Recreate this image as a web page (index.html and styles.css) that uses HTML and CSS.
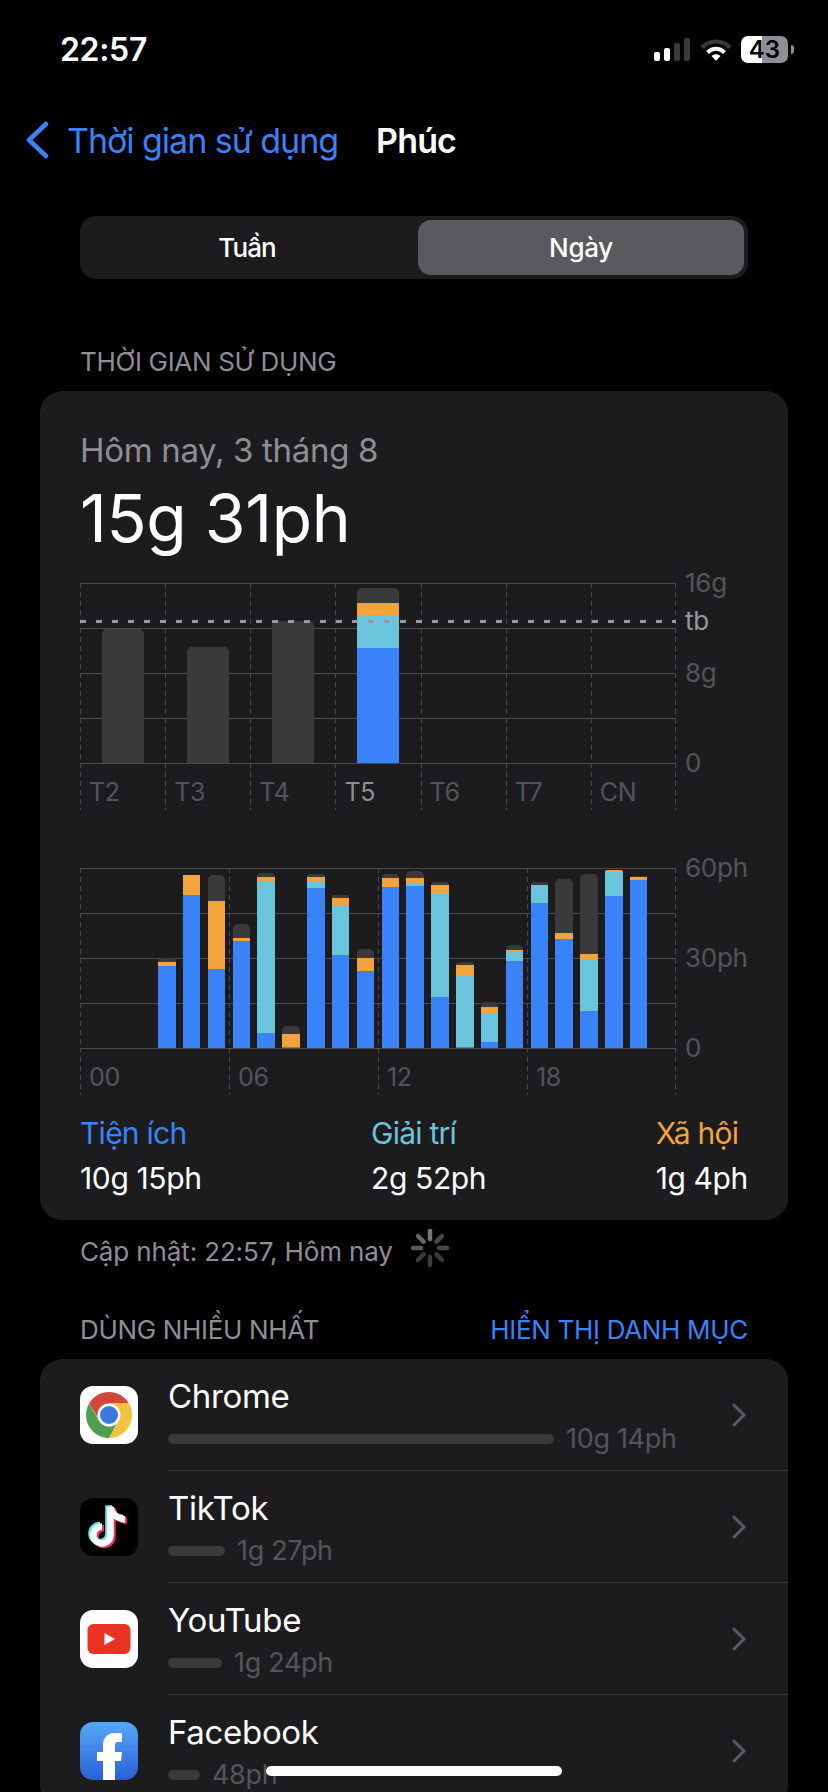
FILE: index.html
```html
<!DOCTYPE html>
<html lang="vi">
<head>
    <meta charset="UTF-8">
    <meta name="viewport" content="width=device-width, initial-scale=1.0">
    <title>Thời gian sử dụng</title>
    <link rel="stylesheet" href="styles.css">
</head>
<body>
    <div class="status-bar">
        <span class="clock">22:57</span>
        <div class="status-icons">
            <div class="signal">
                <i class="signal-bar on h1"></i>
                <i class="signal-bar on h2"></i>
                <i class="signal-bar h3"></i>
                <i class="signal-bar h4"></i>
            </div>
            <svg class="wifi" width="32" height="23" viewBox="0 0 32 23">
                <path d="M2 9.5C10 1.5 22 1.5 30 9.5" fill="none" stroke="#3a3a3c" stroke-width="4"/>
                <path d="M7.5 14.5C12.5 9.5 19.5 9.5 24.5 14.5" fill="none" stroke="#fff" stroke-width="4"/>
                <path d="M11.5 18 16 23 20.5 18C18 15.5 14 15.5 11.5 18Z" fill="#fff"/>
            </svg>
            <div class="battery"><span>43</span></div>
            <i class="battery-tip"></i>
        </div>
    </div>

    <div class="nav">
        <svg class="back-icon" width="26" height="38" viewBox="0 0 26 38">
            <path d="M22 3 5 19 22 35" fill="none" stroke="#3a82f7" stroke-width="4.5" stroke-linecap="round" stroke-linejoin="round"/>
        </svg>
        <span class="back-label">Thời gian sử dụng</span>
        <span class="nav-title">Phúc</span>
    </div>

    <div class="segment">
        <div class="segment-item week">Tuần</div>
        <div class="segment-item active">Ngày</div>
    </div>

    <div class="section-label first">THỜI GIAN SỬ DỤNG</div>

    <div class="card usage-card">
        <div class="date">Hôm nay, 3 tháng 8</div>
        <div class="total">15g 31ph</div>

        <!-- week chart -->
        <div class="chart week-chart">
            <div class="plot">
                <div class="cols cols-week">
                    <div class="col">T2</div>
                    <div class="col">T3</div>
                    <div class="col">T4</div>
                    <div class="col today">T5</div>
                    <div class="col">T6</div>
                    <div class="col">T7</div>
                    <div class="col">CN</div>
                </div>
                <div class="bars bars-week">
                    <div class="bar"><span class="seg gray" style="height:134px"></span></div>
                    <div class="bar"><span class="seg gray" style="height:116px"></span></div>
                    <div class="bar"><span class="seg gray" style="height:142px"></span></div>
                    <div class="bar">
                        <span class="seg gray" style="height:15px"></span>
                        <span class="seg orange" style="height:12px"></span>
                        <span class="seg teal" style="height:33px"></span>
                        <span class="seg blue" style="height:115px"></span>
                    </div>
                    <div class="bar"></div>
                    <div class="bar"></div>
                    <div class="bar"></div>
                </div>
                <div class="avg-line"></div>
            </div>
            <div class="axis">
                <span class="tick t-top">16g</span>
                <span class="tick t-avg">tb</span>
                <span class="tick t-mid">8g</span>
                <span class="tick t-zero">0</span>
            </div>
        </div>

        <!-- hourly chart -->
        <div class="chart hour-chart">
            <div class="plot">
                <div class="cols cols-hour">
                    <div class="col">00</div>
                    <div class="col">06</div>
                    <div class="col">12</div>
                    <div class="col">18</div>
                </div>
                <div class="bars bars-hour">
                    <div class="bar"></div>
                    <div class="bar"></div>
                    <div class="bar"></div>
                    <div class="bar"><span class="seg gray" style="height:3.7px"></span><span class="seg orange" style="height:4px"></span><span class="seg blue" style="height:82.3px"></span></div>
                    <div class="bar"><span class="seg gray" style="height:.7px"></span><span class="seg orange" style="height:19.3px"></span><span class="seg blue" style="height:153.3px"></span></div>
                    <div class="bar"><span class="seg gray" style="height:26px"></span><span class="seg orange" style="height:68px"></span><span class="seg blue" style="height:79.3px"></span></div>
                    <div class="bar"><span class="seg gray" style="height:14px"></span><span class="seg orange" style="height:3px"></span><span class="seg blue" style="height:107.3px"></span></div>
                    <div class="bar"><span class="seg gray" style="height:4px"></span><span class="seg orange" style="height:4.3px"></span><span class="seg teal" style="height:151.7px"></span><span class="seg blue" style="height:15.3px"></span></div>
                    <div class="bar"><span class="seg gray" style="height:8px"></span><span class="seg orange" style="height:13px"></span><span class="seg blue" style="height:1.3px"></span></div>
                    <div class="bar"><span class="seg gray" style="height:3px"></span><span class="seg orange" style="height:5px"></span><span class="seg teal" style="height:6px"></span><span class="seg blue" style="height:160.3px"></span></div>
                    <div class="bar"><span class="seg gray" style="height:3px"></span><span class="seg orange" style="height:8px"></span><span class="seg teal" style="height:49px"></span><span class="seg blue" style="height:93.3px"></span></div>
                    <div class="bar"><span class="seg gray" style="height:9px"></span><span class="seg orange" style="height:13px"></span><span class="seg blue" style="height:77.3px"></span></div>
                    <div class="bar"><span class="seg gray" style="height:4px"></span><span class="seg orange" style="height:9px"></span><span class="seg blue" style="height:161.3px"></span></div>
                    <div class="bar"><span class="seg gray" style="height:7px"></span><span class="seg orange" style="height:6px"></span><span class="seg teal" style="height:2px"></span><span class="seg blue" style="height:162.3px"></span></div>
                    <div class="bar"><span class="seg gray" style="height:3px"></span><span class="seg orange" style="height:9px"></span><span class="seg teal" style="height:103px"></span><span class="seg blue" style="height:51.3px"></span></div>
                    <div class="bar"><span class="seg gray" style="height:3px"></span><span class="seg orange" style="height:10px"></span><span class="seg teal" style="height:72px"></span><span class="seg blue" style="height:1.3px"></span></div>
                    <div class="bar"><span class="seg gray" style="height:5px"></span><span class="seg orange" style="height:6px"></span><span class="seg teal" style="height:29px"></span><span class="seg blue" style="height:6.3px"></span></div>
                    <div class="bar"><span class="seg gray" style="height:5px"></span><span class="seg orange" style="height:1.3px"></span><span class="seg teal" style="height:9.7px"></span><span class="seg blue" style="height:87.3px"></span></div>
                    <div class="bar"><span class="seg gray" style="height:3px"></span><span class="seg teal" style="height:18px"></span><span class="seg blue" style="height:145.3px"></span></div>
                    <div class="bar"><span class="seg gray" style="height:54px"></span><span class="seg orange" style="height:6px"></span><span class="seg blue" style="height:109.3px"></span></div>
                    <div class="bar"><span class="seg gray" style="height:80px"></span><span class="seg orange" style="height:5px"></span><span class="seg teal" style="height:52px"></span><span class="seg blue" style="height:37.3px"></span></div>
                    <div class="bar"><span class="seg orange" style="height:2px"></span><span class="seg teal" style="height:24px"></span><span class="seg blue" style="height:152.3px"></span></div>
                    <div class="bar"><span class="seg gray" style="height:.7px"></span><span class="seg orange" style="height:3px"></span><span class="seg blue" style="height:168.3px"></span></div>
                    <div class="bar"></div>
                </div>
            </div>
            <div class="axis">
                <span class="tick t-top">60ph</span>
                <span class="tick t-half">30ph</span>
                <span class="tick t-half">0</span>
            </div>
        </div>

        <div class="legend">
            <div class="legend-item">
                <div class="legend-name text-blue">Tiện ích</div>
                <div class="legend-value">10g 15ph</div>
            </div>
            <div class="legend-item">
                <div class="legend-name text-teal">Giải trí</div>
                <div class="legend-value">2g 52ph</div>
            </div>
            <div class="legend-item">
                <div class="legend-name text-orange">Xã hội</div>
                <div class="legend-value">1g 4ph</div>
            </div>
        </div>
    </div>

    <div class="updated">
        <span>Cập nhật: 22:57, Hôm nay</span>
        <svg class="spinner" width="40" height="40" viewBox="0 0 40 40" fill="none" stroke-width="4.5" stroke-linecap="round">
            <path d="M20 3V11" stroke="#77777b"/>
            <path d="M32 8 26.4 13.6" stroke="#48484a"/>
            <path d="M37 20H29" stroke="#48484a"/>
            <path d="M32 32 26.4 26.4" stroke="#3a3a3c"/>
            <path d="M20 37V29" stroke="#3a3a3c"/>
            <path d="M8 32 13.6 26.4" stroke="#3a3a3c"/>
            <path d="M3 20H11" stroke="#5a5a5e"/>
            <path d="M8 8 13.6 13.6" stroke="#66666a"/>
        </svg>
    </div>

    <div class="list-header">
        <span class="section-label">DÙNG NHIỀU NHẤT</span>
        <span class="section-link">HIỂN THỊ DANH MỤC</span>
    </div>

    <div class="card app-list">
        <div class="app-row">
            <svg class="app-icon" viewBox="0 0 58 58">
                <rect width="58" height="58" rx="13" fill="#fff"/>
                <path d="M9.1 17.5A23 23 0 0 1 48.9 17.5H29L19.5 34.5Z" fill="#d2473a"/>
                <path d="M9.1 17.5A23 23 0 0 1 48.9 17.5H29L19.5 34.5Z" fill="#f3c13f" transform="rotate(120 29 29)"/>
                <path d="M9.1 17.5A23 23 0 0 1 48.9 17.5H29L19.5 34.5Z" fill="#4f9d55" transform="rotate(240 29 29)"/>
                <circle cx="29" cy="29" r="11.5" fill="#fff"/>
                <circle cx="29" cy="29" r="9" fill="#3b78e0"/>
            </svg>
            <div class="app-body">
                <div class="app-main">
                    <div class="app-name">Chrome</div>
                    <div class="app-usage">
                        <span class="usage-bar" style="width:386px"></span>
                        <span class="usage-value">10g 14ph</span>
                    </div>
                </div>
                <svg class="chevron" width="14" height="24" viewBox="0 0 14 24"><path d="M2 2 12 12 2 22" fill="none" stroke="#5a5a5e" stroke-width="3" stroke-linecap="round" stroke-linejoin="round"/></svg>
            </div>
        </div>

        <div class="app-row">
            <svg class="app-icon" viewBox="0 0 58 58">
                <defs>
                    <g id="note" fill="none" stroke-width="6.5">
                        <path d="M30.5 9V37A8.5 8.5 0 1 1 22 28.5"/>
                        <path d="M30.5 9C31.5 16 37 20.5 45 21.5"/>
                    </g>
                </defs>
                <rect width="58" height="58" rx="13" fill="#000"/>
                <use href="#note" stroke="#5ff0ec" x="-2" y="-1.5"/>
                <use href="#note" stroke="#f0305c" x="2" y="1.5"/>
                <use href="#note" stroke="#fff"/>
            </svg>
            <div class="app-body">
                <div class="app-main">
                    <div class="app-name">TikTok</div>
                    <div class="app-usage">
                        <span class="usage-bar" style="width:57px"></span>
                        <span class="usage-value">1g 27ph</span>
                    </div>
                </div>
                <svg class="chevron" width="14" height="24" viewBox="0 0 14 24"><path d="M2 2 12 12 2 22" fill="none" stroke="#5a5a5e" stroke-width="3" stroke-linecap="round" stroke-linejoin="round"/></svg>
            </div>
        </div>

        <div class="app-row">
            <svg class="app-icon" viewBox="0 0 58 58">
                <rect width="58" height="58" rx="13" fill="#fff"/>
                <rect x="7.5" y="14" width="43" height="30" rx="6" fill="#e93323"/>
                <path d="M24.5 23 35 29 24.5 35Z" fill="#fff"/>
            </svg>
            <div class="app-body">
                <div class="app-main">
                    <div class="app-name">YouTube</div>
                    <div class="app-usage">
                        <span class="usage-bar" style="width:54px"></span>
                        <span class="usage-value">1g 24ph</span>
                    </div>
                </div>
                <svg class="chevron" width="14" height="24" viewBox="0 0 14 24"><path d="M2 2 12 12 2 22" fill="none" stroke="#5a5a5e" stroke-width="3" stroke-linecap="round" stroke-linejoin="round"/></svg>
            </div>
        </div>

        <div class="app-row">
            <svg class="app-icon" viewBox="0 0 58 58">
                <defs>
                    <linearGradient id="fb-blue" x1="0" y1="0" x2="0" y2="1">
                        <stop offset="0" stop-color="#55a9f8"/>
                        <stop offset="1" stop-color="#2a5fd8"/>
                    </linearGradient>
                </defs>
                <rect width="58" height="58" rx="13" fill="url(#fb-blue)"/>
                <path d="M23 58V39H17V30H23V23C23 15 28 11 35 11H42V20H38C35.5 20 35 21 35 24V30H42L41 39H35V58Z" fill="#fff"/>
            </svg>
            <div class="app-body">
                <div class="app-main">
                    <div class="app-name">Facebook</div>
                    <div class="app-usage">
                        <span class="usage-bar" style="width:32px"></span>
                        <span class="usage-value">48ph</span>
                    </div>
                </div>
                <svg class="chevron" width="14" height="24" viewBox="0 0 14 24"><path d="M2 2 12 12 2 22" fill="none" stroke="#5a5a5e" stroke-width="3" stroke-linecap="round" stroke-linejoin="round"/></svg>
            </div>
        </div>
    </div>

    <div class="home-indicator"></div>
</body>
</html>
```
FILE: styles.css
```css
* {
    box-sizing: border-box;
}

body {
    font-family: Inter, "Noto Sans", sans-serif;
    background-color: #000;
    color: #fff;
    margin: 0;
    height: 1792px;
    overflow: hidden;
    position: relative;
    letter-spacing: -0.02em;
}

/* status bar */
.status-bar {
    height: 98px;
    padding: 0 34px 0 60px;
    display: flex;
    justify-content: space-between;
    align-items: center;
}

.clock {
    font-size: 32px;
    font-weight: 600;
    letter-spacing: -0.01em;
}

.status-icons {
    display: flex;
    align-items: center;
}

.signal {
    display: flex;
    align-items: flex-end;
    gap: 3.5px;
    height: 23px;
    margin-right: 10px;
}

.signal-bar {
    width: 6.5px;
    background-color: #3a3a3c;
    border-radius: 2px;
}

.signal-bar.on {
    background-color: #fff;
}

.h1 { height: 9px; }
.h2 { height: 13px; }
.h3 { height: 18px; }
.h4 { height: 23px; }

.wifi {
    margin-right: 9px;
}

.battery {
    width: 47px;
    height: 27px;
    border-radius: 7px;
    background: linear-gradient(to right, #fff 0 21px, #8e8e93 21px);
    color: #000;
    font-size: 24px;
    font-weight: 600;
    line-height: 27px;
    letter-spacing: 0;
    text-align: center;
}

.battery-tip {
    width: 3px;
    height: 9px;
    margin-left: 3px;
    background-color: #8e8e93;
    border-radius: 0 3px 3px 0;
}

/* nav */
.nav {
    height: 84px;
    padding-left: 24px;
    display: flex;
    align-items: center;
    font-size: 34px;
}

.back-label {
    color: #3a82f7;
    margin-left: 17px;
    letter-spacing: -0.03em;
}

.nav-title {
    font-weight: 600;
    margin-left: 38px;
    letter-spacing: -0.025em;
}

/* segmented control */
.segment {
    margin: 34px 80px 0;
    height: 63px;
    padding: 4px;
    background-color: #1c1c1e;
    border-radius: 16px;
    display: grid;
    grid-template-columns: 1fr 326px;
    font-size: 26px;
    font-weight: 500;
}

.segment-item {
    display: flex;
    align-items: center;
    justify-content: center;
    border-radius: 13px;
}

.segment-item.week {
    padding-right: 8px;
    letter-spacing: -0.035em;
}

.segment-item.active {
    background-color: #5a5a5e;
}

/* section headers */
.section-label {
    font-size: 26px;
    line-height: 32px;
    color: #8e8e93;
}

.section-label.first {
    margin: 67px 80px 13px;
}

.card {
    margin: 0 40px;
    background-color: #1c1c1e;
    border-radius: 22px;
}

.usage-card {
    padding: 39px 40px 22px;
}

.date {
    font-size: 33px;
    line-height: 40px;
    color: #8e8e93;
}

.total {
    font-size: 66px;
    line-height: 76px;
    margin-top: 10px;
}

/* charts */
.chart {
    display: grid;
    grid-template-columns: 596px 1fr;
    column-gap: 9px;
    margin-right: -40px;
}

.week-chart {
    margin-top: 27px;
}

.hour-chart {
    margin-top: 58px;
}

.plot {
    display: grid;
    height: 227px;
}

.plot > * {
    grid-area: 1 / 1;
}

.cols {
    display: grid;
    background: repeating-linear-gradient(to bottom, #4a4a4c 0 1px, transparent 1px 45px) top / 100% 181px no-repeat;
}

.cols-week {
    grid-template-columns: repeat(7, 1fr);
}

.cols-hour {
    grid-template-columns: repeat(4, 1fr);
}

.col {
    height: 227px;
    padding: 194px 0 0 9px;
    font-size: 25px;
    line-height: 30px;
    color: #545458;
    background: repeating-linear-gradient(to bottom, #4a4a4c 0 5px, transparent 5px 9px) left top / 1px 100% no-repeat;
}

.col:last-child {
    background:
        repeating-linear-gradient(to bottom, #4a4a4c 0 5px, transparent 5px 9px) left top / 1px 100% no-repeat,
        repeating-linear-gradient(to bottom, #4a4a4c 0 5px, transparent 5px 9px) right top / 1px 100% no-repeat;
}

.col.today {
    color: #8e8e93;
}

.bars {
    display: grid;
    height: 180px;
}

.bars-week {
    grid-template-columns: repeat(7, 1fr);
}

.bars-hour {
    grid-template-columns: repeat(24, 1fr);
}

.bar {
    display: flex;
    flex-direction: column;
    justify-content: flex-end;
    align-items: center;
}

.seg {
    display: block;
    flex-shrink: 0;
}

.bars-week .seg {
    width: 42px;
}

.bars-hour .seg {
    width: 17.5px;
}

.seg:first-child {
    border-radius: 5px 5px 0 0;
}

.gray { background-color: #3a3a3c; }
.orange { background-color: #f2a33c; }
.teal { background-color: #6ac4dc; }
.blue { background-color: #3a82f7; }

.avg-line {
    height: 3px;
    margin-top: 37px;
    background: repeating-linear-gradient(to right, #98989d 0 6px, transparent 6px 16px);
}

.axis {
    display: flex;
    flex-direction: column;
    align-items: flex-start;
    font-size: 26px;
    line-height: 30px;
    letter-spacing: -0.01em;
    color: #545458;
}

.t-top { margin-top: -15px; }
.t-avg { margin-top: 8px; color: #98989d; }
.t-mid { margin-top: 22px; }
.t-zero { margin-top: 60px; }
.t-half { margin-top: 60px; }

/* totals under the charts */
.legend {
    display: flex;
    justify-content: space-between;
    margin-top: 18px;
    font-size: 30px;
    line-height: 40px;
}

.legend-name {
    letter-spacing: -0.025em;
}

.legend-value {
    margin-top: 5px;
    letter-spacing: -0.012em;
}

.text-blue { color: #3a82f7; }
.text-teal { color: #6ac4dc; }
.text-orange { color: #f2a33c; }

.updated {
    margin: 16px 0 0 80px;
    display: flex;
    align-items: center;
    font-size: 26px;
    line-height: 32px;
    letter-spacing: -0.005em;
    color: #8e8e93;
}

.spinner {
    margin: -8px 0 0 17px;
    height: 40px;
}

.list-header {
    margin: 46px 80px 13px;
    display: flex;
    justify-content: space-between;
}

.section-link {
    font-size: 26px;
    line-height: 32px;
    color: #3a82f7;
}

/* app list */
.app-row {
    display: flex;
    align-items: center;
    padding-left: 40px;
}

.app-icon {
    width: 58px;
    height: 58px;
    flex-shrink: 0;
    margin-right: 30px;
}

.app-body {
    flex: 1;
    height: 112px;
    display: flex;
    align-items: center;
    justify-content: space-between;
    padding-right: 42px;
    border-bottom: 1px solid #38383a;
}

.app-main {
    align-self: flex-start;
    padding-top: 16px;
}

.app-name {
    font-size: 33px;
    line-height: 42px;
}

.app-usage {
    margin-top: 6px;
    display: flex;
    align-items: center;
    gap: 12px;
    font-size: 27px;
    line-height: 32px;
    color: #545458;
}

.usage-bar {
    height: 10px;
    border-radius: 5px;
    background-color: #3a3a3c;
}

.home-indicator {
    position: absolute;
    left: 266px;
    bottom: 16px;
    width: 296px;
    height: 10px;
    border-radius: 5px;
    background-color: #fff;
}
```
